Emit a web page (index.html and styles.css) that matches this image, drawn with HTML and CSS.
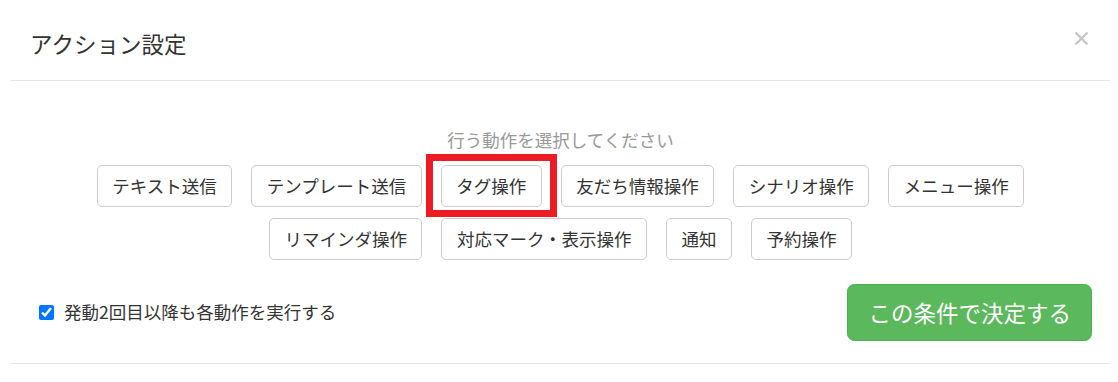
FILE: index.html
```html
<!DOCTYPE html>
<html lang="ja">
<head>
<meta charset="utf-8">
<title>アクション設定</title>
<link rel="stylesheet" href="styles.css">
</head>
<body>
<div class="modal">
  <div class="modal-header">
    <h4 class="modal-title">アクション設定</h4>
    <button class="close" type="button" aria-label="閉じる">
      <svg width="15" height="15" viewBox="0 0 15 15"><path d="M1.5 1.5L13.5 13.5M13.5 1.5L1.5 13.5" stroke="#c6c6c6" stroke-width="2.4" fill="none"/></svg>
    </button>
  </div>
  <div class="modal-body">
    <p class="lead-text">行う動作を選択してください</p>
    <div class="action-list">
      <button class="btn" type="button">テキスト送信</button>
      <button class="btn" type="button">テンプレート送信</button>
      <span class="highlight-wrap">
        <button class="btn" type="button">タグ操作</button>
        <span class="highlight-box"></span>
      </span>
      <button class="btn" type="button">友だち情報操作</button>
      <button class="btn" type="button">シナリオ操作</button>
      <button class="btn" type="button">メニュー操作</button>
    </div>
    <div class="action-list">
      <button class="btn" type="button">リマインダ操作</button>
      <button class="btn" type="button">対応マーク・表示操作</button>
      <button class="btn" type="button">通知</button>
      <button class="btn" type="button">予約操作</button>
    </div>
    <div class="decide-row">
      <label class="check-label"><input type="checkbox" checked> 発動2回目以降も各動作を実行する</label>
      <button class="btn-success" type="button">この条件で決定する</button>
    </div>
  </div>
  <div class="modal-footer"></div>
</div>
</body>
</html>
```
FILE: styles.css
```css
html, body {
  margin: 0;
  padding: 0;
  background: #fff;
}
body {
  font-family: "Noto Sans CJK JP", "Noto Sans", sans-serif;
  color: #333;
  height: 382px;
  overflow: hidden;
}
.modal {
  margin: 10px 0 0 11px;
  width: 1099px;
}
.modal-header {
  display: flex;
  justify-content: space-between;
  align-items: flex-start;
  padding: 17px 19px 21px 19px;
  border-bottom: 1px solid #e5e5e5;
}
.modal-title {
  margin: 0;
  font-size: 22.5px;
  line-height: 32px;
  font-weight: normal;
  color: #333;
}
.close {
  background: none;
  border: 0;
  padding: 0;
  margin: 4px 2px 0 0;
  width: 15px;
  height: 15px;
  line-height: 0;
  cursor: pointer;
}
.modal-body {
  padding: 46px 19px 22px 19px;
}
.lead-text {
  margin: 0 0 12.5px;
  text-align: center;
  font-size: 17.5px;
  line-height: 25px;
  color: #999;
}
.action-list {
  display: flex;
  justify-content: center;
  gap: 19px;
  margin-bottom: 11px;
}
.btn {
  font-family: inherit;
  font-size: 17.5px;
  line-height: 25px;
  color: #333;
  background: #fff;
  border: 1px solid #ccc;
  border-radius: 5px;
  padding: 7.5px 14.5px;
  margin: 0;
  white-space: nowrap;
  cursor: pointer;
}
.highlight-wrap {
  position: relative;
  display: flex;
}
.highlight-box {
  position: absolute;
  top: -10.5px;
  bottom: -10.5px;
  left: -15px;
  right: -15px;
  border: 7px solid #ed1c24;
  pointer-events: none;
}
.decide-row {
  display: flex;
  justify-content: space-between;
  align-items: center;
  margin-top: 24px;
  padding-left: 9px;
}
.check-label {
  display: flex;
  align-items: center;
  gap: 10px;
  font-size: 17.5px;
  line-height: 26px;
  color: #333;
}
.check-label input {
  margin: 0;
  width: 15px;
  height: 15px;
}
.btn-success {
  font-family: inherit;
  font-size: 22.5px;
  line-height: 30px;
  color: #fff;
  background: #5cb85c;
  border: 1px solid #4cae4c;
  border-radius: 7.5px;
  padding: 12.5px 20px;
  margin: 0 -1px 0 0;
  cursor: pointer;
}
.modal-footer {
  border-top: 1px solid #e5e5e5;
  height: 60px;
}
```
